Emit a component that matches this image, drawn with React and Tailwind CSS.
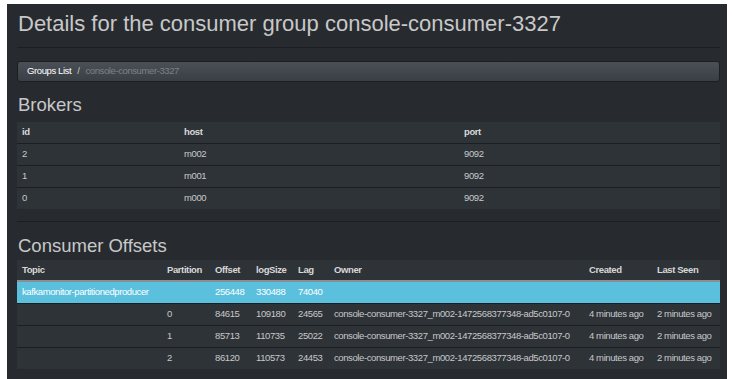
import React from "react";

const brokers = [
  { id: "2", host: "m002", port: "9092" },
  { id: "1", host: "m001", port: "9092" },
  { id: "0", host: "m000", port: "9092" },
];

const owner = "console-consumer-3327_m002-1472568377348-ad5c0107-0";

const offsets = [
  { partition: "0", offset: "84615", logSize: "109180", lag: "24565" },
  { partition: "1", offset: "85713", logSize: "110735", lag: "25022" },
  { partition: "2", offset: "86120", logSize: "110573", lag: "24453" },
];

const cell = "pl-[5px] whitespace-nowrap overflow-hidden";

export default function App() {
  return (
    <div className="w-[732px] h-[379px] overflow-hidden bg-white pt-[4px] pl-[7px] pr-[5px] font-['Liberation_Sans',Arial,sans-serif]">
      <div className="h-full bg-[#272b30] pl-[10px] pr-[7px] pt-[8px] text-[#c8c8c8]">
        <h1 className="text-[22px] leading-[24px] pl-[1px]">
          Details for the consumer group console-consumer-3327
        </h1>
        <div className="mt-[11px] border-t border-[#1c1e22]" />

        <div className="mt-[13px] h-[21px] flex items-center rounded-[3px] border border-[#1c1e22] bg-gradient-to-b from-[#4a5057] to-[#3a3f44] pl-[9px] text-[9.5px] tracking-[-0.4px]">
          <span className="text-white">Groups List</span>
          <span className="px-[6px] text-[#c8c8c8]">/</span>
          <span className="text-[#7a8288]">console-consumer-3327</span>
        </div>

        <h3 className="mt-[12px] text-[18.5px] leading-[21px] pl-[1px]">Brokers</h3>
        <table className="mt-[7px] w-full table-fixed bg-[#2e3338] text-[9.5px] tracking-[-0.4px]">
          <colgroup>
            <col className="w-[162px]" />
            <col className="w-[280px]" />
            <col />
          </colgroup>
          <thead>
            <tr className="h-[21px] font-bold text-[#d8d8d8]">
              <th className={cell + " text-left"}>id</th>
              <th className={cell + " text-left"}>host</th>
              <th className={cell + " text-left"}>port</th>
            </tr>
          </thead>
          <tbody>
            {brokers.map((b) => (
              <tr key={b.id} className="h-[22px] border-t border-[#1c1e22]">
                <td className={cell}>{b.id}</td>
                <td className={cell}>{b.host}</td>
                <td className={cell}>{b.port}</td>
              </tr>
            ))}
          </tbody>
        </table>

        <div className="mt-[12px] border-t border-[#1c1e22]" />

        <h3 className="mt-[13px] text-[18.5px] leading-[21px] pl-[1px]">Consumer Offsets</h3>
        <table className="mt-[4px] w-full table-fixed bg-[#2e3338] text-[9.5px] tracking-[-0.4px]">
          <colgroup>
            <col className="w-[145px]" />
            <col className="w-[48px]" />
            <col className="w-[41px]" />
            <col className="w-[42px]" />
            <col className="w-[36px]" />
            <col className="w-[255px]" />
            <col className="w-[68px]" />
            <col />
          </colgroup>
          <thead>
            <tr className="h-[21px] font-bold text-[#d8d8d8] border-b-2 border-[#8a8f95]">
              <th className={cell + " text-left"}>Topic</th>
              <th className={cell + " text-left"}>Partition</th>
              <th className={cell + " text-left"}>Offset</th>
              <th className={cell + " text-left"}>logSize</th>
              <th className={cell + " text-left"}>Lag</th>
              <th className={cell + " text-left"}>Owner</th>
              <th className={cell + " text-left"}>Created</th>
              <th className={cell + " text-left"}>Last Seen</th>
            </tr>
          </thead>
          <tbody>
            <tr className="h-[22px] bg-[#5bc0de] text-white">
              <td className={cell}>kafkamonitor-partitionedproducer</td>
              <td className={cell}></td>
              <td className={cell}>256448</td>
              <td className={cell}>330488</td>
              <td className={cell}>74040</td>
              <td className={cell}></td>
              <td className={cell}></td>
              <td className={cell}></td>
            </tr>
            {offsets.map((o) => (
              <tr key={o.partition} className="h-[22px] border-t border-[#1c1e22]">
                <td className={cell}></td>
                <td className={cell}>{o.partition}</td>
                <td className={cell}>{o.offset}</td>
                <td className={cell}>{o.logSize}</td>
                <td className={cell}>{o.lag}</td>
                <td className={cell}>{owner}</td>
                <td className={cell}>4 minutes ago</td>
                <td className={cell}>2 minutes ago</td>
              </tr>
            ))}
          </tbody>
        </table>
      </div>
    </div>
  );
}
